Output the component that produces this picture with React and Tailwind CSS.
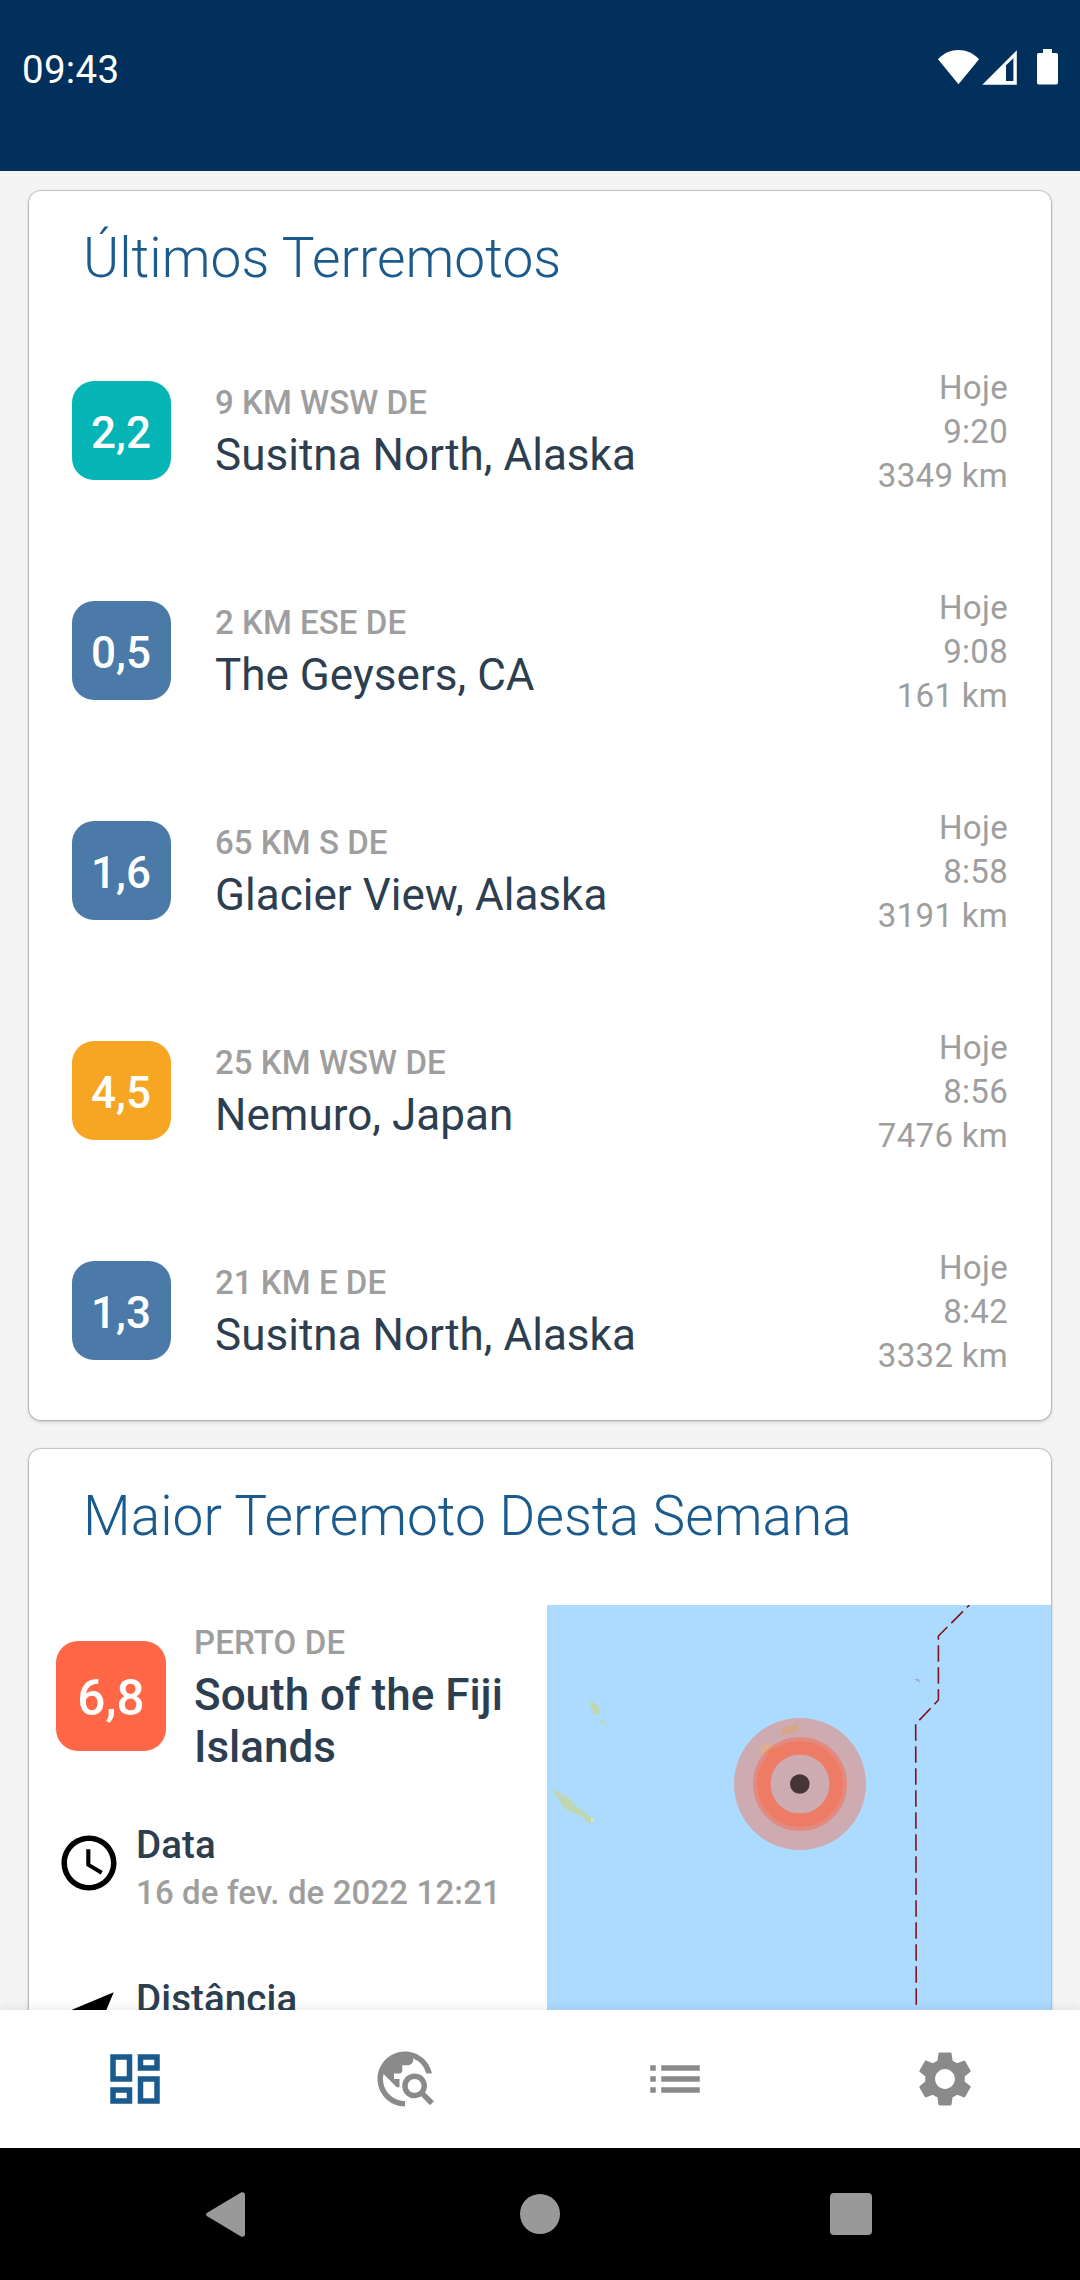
import {
  MdAccessTime,
  MdList,
  MdNearMe,
  MdOutlineDashboard,
  MdSettings,
  MdTravelExplore,
} from "react-icons/md";

const quakes = [
  { mag: "2,2", color: "bg-[#05b5b5]", from: "9 KM WSW DE", place: "Susitna North, Alaska", time: "9:20", distance: "3349 km" },
  { mag: "0,5", color: "bg-[#4b7aa8]", from: "2 KM ESE DE", place: "The Geysers, CA", time: "9:08", distance: "161 km" },
  { mag: "1,6", color: "bg-[#4b7aa8]", from: "65 KM S DE", place: "Glacier View, Alaska", time: "8:58", distance: "3191 km" },
  { mag: "4,5", color: "bg-[#f6a623]", from: "25 KM WSW DE", place: "Nemuro, Japan", time: "8:56", distance: "7476 km" },
  { mag: "1,3", color: "bg-[#4b7aa8]", from: "21 KM E DE", place: "Susitna North, Alaska", time: "8:42", distance: "3332 km" },
];

function StatusBar() {
  return (
    <header className="flex h-[171px] shrink-0 items-start justify-between bg-[#00305b] pl-[22px] pr-[22px] pt-[49px] text-white">
      <span className="pt-px text-[38.5px] leading-[40px] tracking-[0.3px]">09:43</span>
      <svg className="h-9 w-[120px] fill-white" viewBox="0 0 120 36">
        <path d="M0 10.3C11.5-2 29.5-2 41 10.3L20.5 35.3Z" />
        <path fillRule="evenodd" d="M44.3 35.7 78.8 1.3V35.7ZM68 16.3V32H75.4V9.2Z" />
        <path d="M105 0h9v4h4.2a1.8 1.8 0 0 1 1.8 1.8v28a1.8 1.8 0 0 1-1.8 1.8h-17.4a1.8 1.8 0 0 1-1.8-1.8v-28a1.8 1.8 0 0 1 1.8-1.8H105Z" />
      </svg>
    </header>
  );
}

function Card({ title, children }) {
  return (
    <section className="shrink-0 overflow-hidden rounded-[12px] bg-white shadow-[0_0_1px_1px_rgba(0,0,0,0.2),0_2px_4px_rgba(0,0,0,0.16)]">
      <h2 className="pl-[54px] pt-[35px] text-[55px] font-light leading-[64px] tracking-[0.04px] text-[#1b5a8c]">{title}</h2>
      {children}
    </section>
  );
}

function QuakeRow({ quake }) {
  return (
    <li className="flex h-[220px] items-start pl-[43px] pr-[43px]">
      <div className={`mt-[61px] flex size-[99px] shrink-0 items-center justify-center rounded-[22px] pr-px pt-[5px] text-[44px] font-medium text-white ${quake.color}`}>
        {quake.mag}
      </div>
      <div className="ml-[44px] mt-[61px] flex-1">
        <p className="text-[33px] font-medium leading-[44px] tracking-[0.05px] text-[#9e9e9e]">{quake.from}</p>
        <p className="text-[44px] leading-[60px] tracking-[0.03px] text-[#2c3e50]">{quake.place}</p>
      </div>
      <div className="mt-[46px] text-right text-[33px] leading-[44px] tracking-[0.3px] text-[#9e9e9e]">
        <p>Hoje</p>
        <p>{quake.time}</p>
        <p>{quake.distance}</p>
      </div>
    </li>
  );
}

function Detail({ icon: Icon, label, value }) {
  return (
    <div className="flex h-[154px] items-start pl-[27px]">
      <Icon className="size-[66px] shrink-0 text-black" />
      <div className="-mt-[8px] ml-[14px] whitespace-nowrap">
        <p className="text-[38.5px] font-medium leading-[46px] tracking-[0.1px] text-[#2c3e50]">{label}</p>
        <p className="text-[33px] font-medium leading-[50px] tracking-[0.12px] text-[#9e9e9e]">{value}</p>
      </div>
    </div>
  );
}

function EpicenterMap() {
  return (
    <svg className="h-[460px] w-[504px] shrink-0 bg-[#addaff]" viewBox="0 0 504 460">
      <g fill="#bfd8b3">
        <path d="M44.3 95 52.6 103 51.9 109.3 46.4 109 43 99Z" />
        <path d="M54.3 113.7 60.8 122 52.6 116.3Z" />
        <path d="M4 183.3 22.3 193 28.1 200.3 44 212.3 48.1 216.3 41.2 218.7 35.7 212.3 17.4 203.7Z" />
      </g>
      <path fill="#d5ebb9" d="M44 212.3 48.1 216.3 44 217Z" />
      <path fill="#a9a7c8" d="M367.3 74H371.5L373.7 78 369.5 75.8Z" />
      <polyline
        points="422.4,0 391.4,31 391.4,95 368.7,119 369.4,460"
        fill="none"
        stroke="#85101c"
        strokeWidth="1.6"
        strokeDasharray="16.5 5.5"
        strokeDashoffset="12.9"
      />
      <circle cx="253" cy="179" r="66" fill="#ceabb1" />
      <path fill="#d6a787" d="M235 123.7 250.7 118.3 251.7 125.7 233 130.7Z" />
      <path fill="#dfad8c" d="M212 144.3 219.7 137.7 226 140 231.7 144.3 219.7 150.3H215.3Z" />
      <circle cx="253" cy="179" r="38.3" fill="none" stroke="#e28a7f" strokeWidth="17.5" />
      <circle cx="253" cy="179" r="36.3" fill="none" stroke="#ee7b65" strokeWidth="13.4" />
      <path fill="#ef7c56" d="M221 147.5 226 142.5 231.5 145 224 151.5Z" />
      <circle cx="252.8" cy="179" r="9.8" fill="#443638" />
    </svg>
  );
}

function BiggestQuake() {
  return (
    <div className="mt-[57px] flex">
      <div className="w-[518px]">
        <div className="flex h-[225px] pl-[27px]">
          <div className="mt-[36px] flex size-[110px] shrink-0 items-center justify-center rounded-[22px] bg-[#ff6746] pt-[5px] text-[49.5px] font-medium text-white">
            6,8
          </div>
          <div className="ml-[28px] mt-[16px]">
            <p className="text-[33px] font-medium leading-[44px] tracking-[0.15px] text-[#9e9e9e]">PERTO DE</p>
            <p className="mt-1 w-[320px] text-[44px] font-medium leading-[52px] text-[#2c3e50]">South of the Fiji Islands</p>
          </div>
        </div>
        <Detail icon={MdAccessTime} label="Data" value="16 de fev. de 2022 12:21" />
        <Detail icon={MdNearMe} label="Distância" />
      </div>
      <EpicenterMap />
    </div>
  );
}

const tabs = [
  { label: "Painel", icon: MdOutlineDashboard, color: "text-[#1b5a8c]" },
  { label: "Explorar", icon: MdTravelExplore, color: "text-[#8a8a8a]" },
  { label: "Lista", icon: MdList, color: "text-[#8a8a8a]" },
  { label: "Ajustes", icon: MdSettings, color: "text-[#8a8a8a]" },
];

export default function App() {
  return (
    <div className="flex h-[2280px] w-[1080px] flex-col overflow-hidden bg-[#f4f4f4] font-[Roboto,sans-serif]">
      <StatusBar />
      <main className="flex min-h-0 flex-1 flex-col gap-[29px] overflow-hidden px-[29px] pt-[20px]">
        <Card title="Últimos Terremotos">
          <ul className="mt-[30px]">
            {quakes.map((quake) => (
              <QuakeRow key={quake.time} quake={quake} />
            ))}
          </ul>
        </Card>
        <Card title="Maior Terremoto Desta Semana">
          <BiggestQuake />
        </Card>
      </main>
      <nav className="relative grid h-[138px] shrink-0 grid-cols-4 place-items-center bg-white shadow-[0_-2px_10px_rgba(0,0,0,0.08)]">
        {tabs.map(({ label, icon: Icon, color }) => (
          <button key={label} aria-label={label} className={color}>
            <Icon className="size-[66px]" />
          </button>
        ))}
      </nav>
      <footer className="flex h-[132px] shrink-0 items-center justify-between bg-black pl-[206px] pr-[208px]">
        <svg className="h-[45px] w-[39px] fill-[#999]" viewBox="0 0 39 45">
          <path d="M1.2 20.8 35 .6C37 -.4 39 .6 39 3V42c0 2.4-2 3.4-4 2.4L1.2 24.2C-.3 23.2-.3 21.8 1.2 20.8Z" />
        </svg>
        <div className="ml-1 size-10 rounded-full bg-[#999]" />
        <div className="size-[42px] rounded-[4px] bg-[#999]" />
      </footer>
    </div>
  );
}
